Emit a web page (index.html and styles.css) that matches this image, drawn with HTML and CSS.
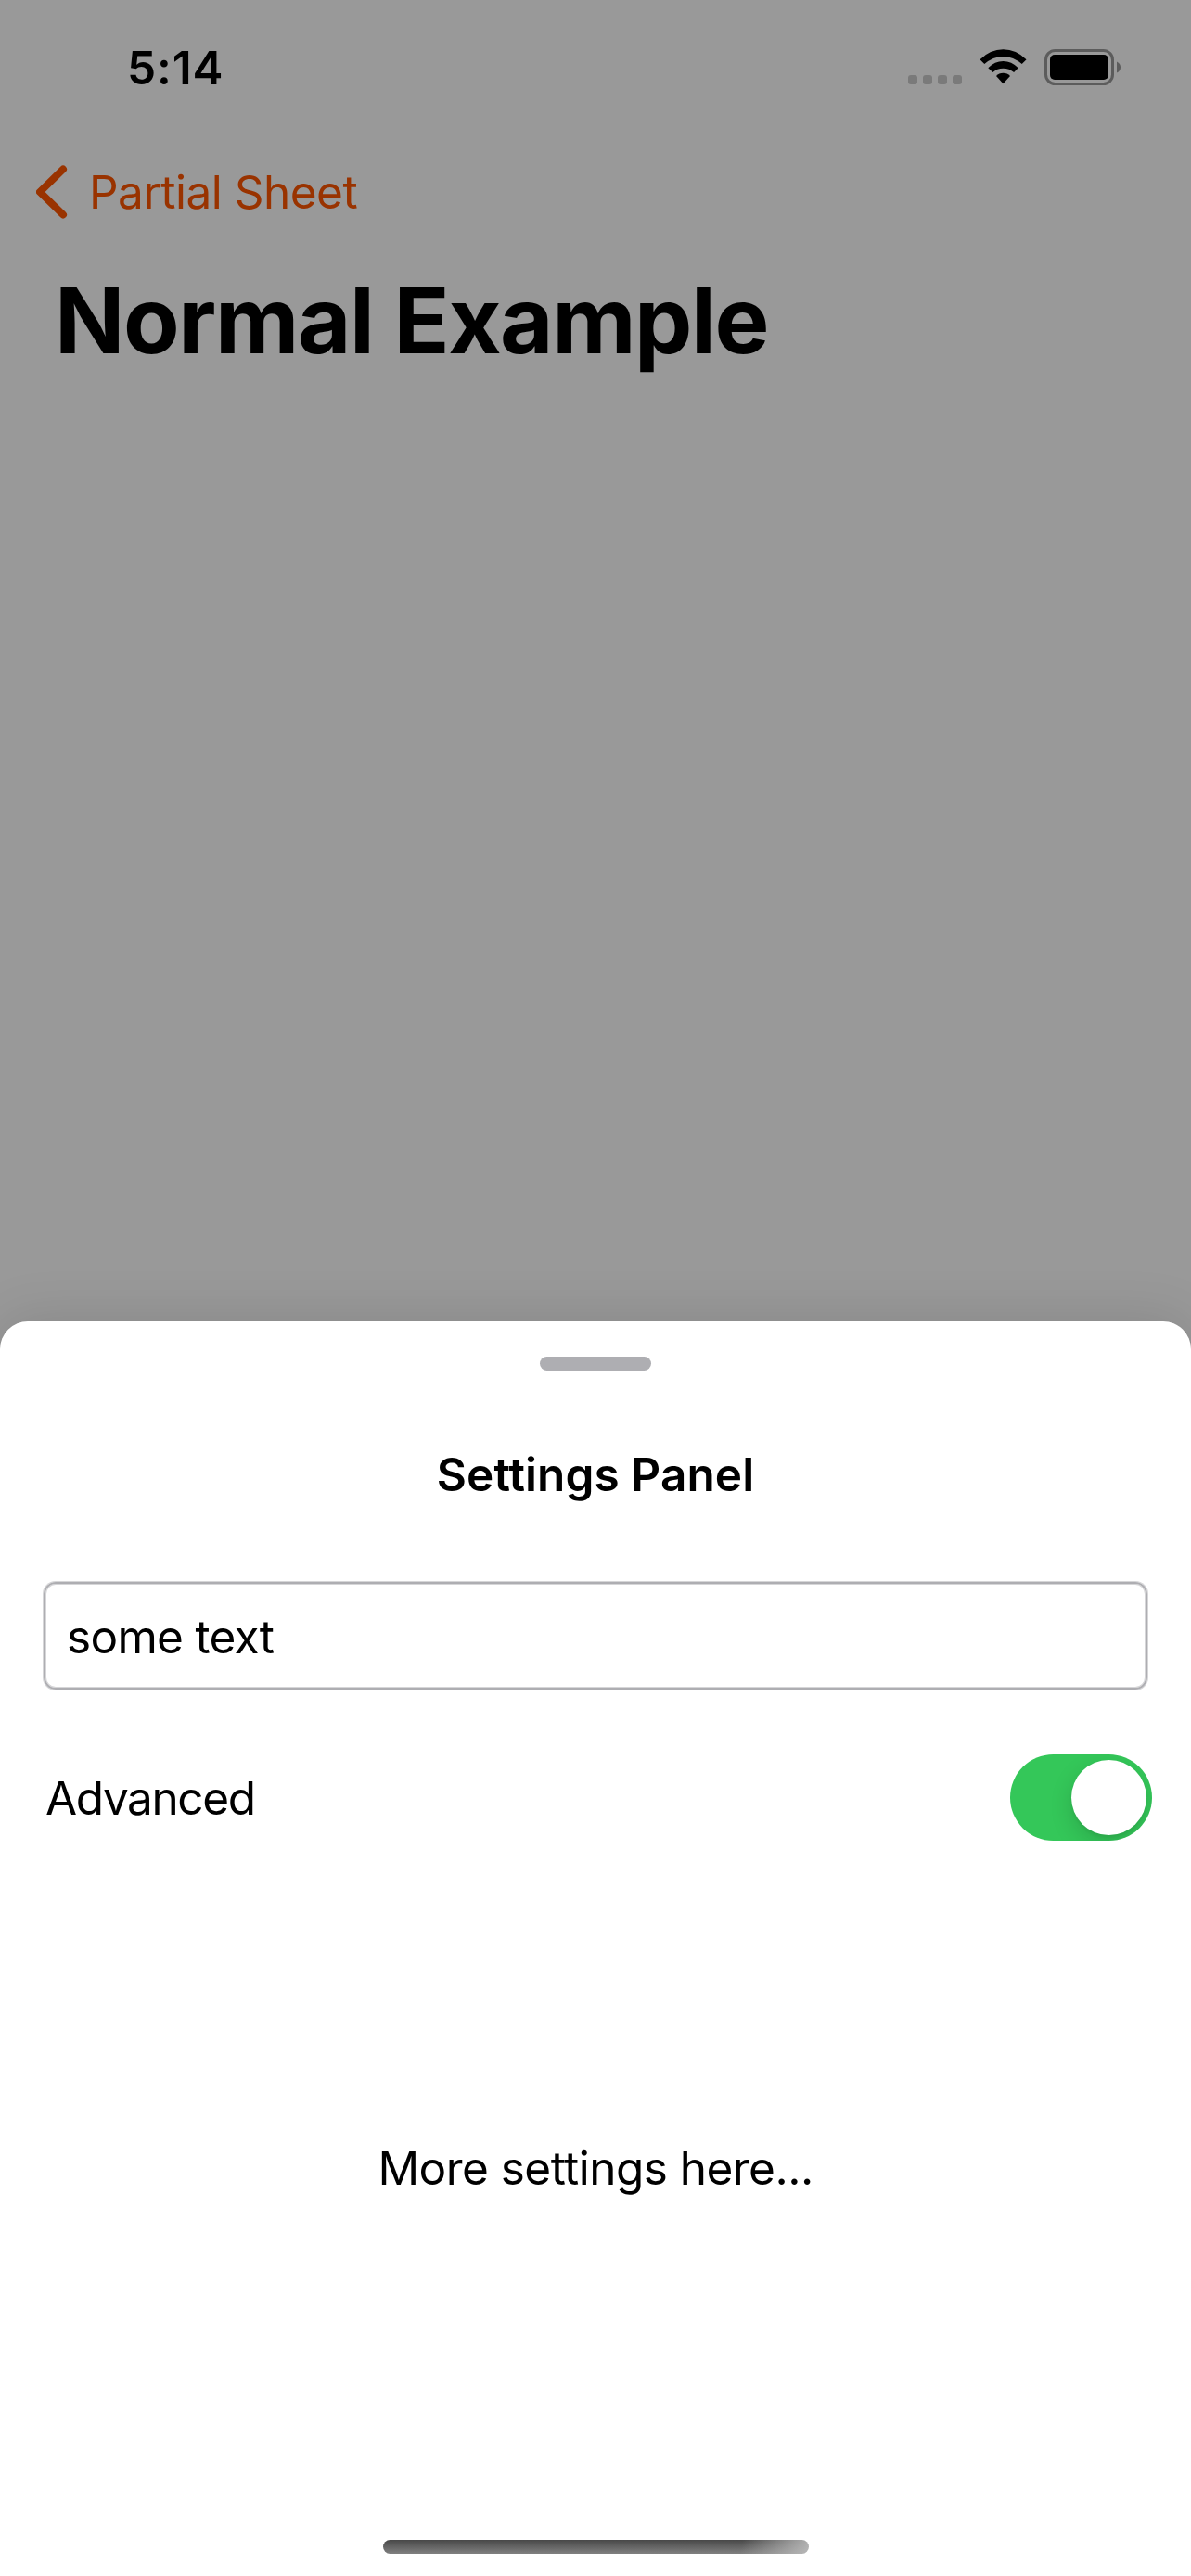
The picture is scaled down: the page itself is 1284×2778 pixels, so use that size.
FILE: index.html
```html
<!DOCTYPE html>
<html lang="en">
<head>
<meta charset="utf-8">
<title>Normal Example</title>
<link rel="stylesheet" href="styles.css">
</head>
<body>
<main class="screen">
  <header class="status-bar">
    <span class="time">5:14</span>
    <div class="indicators">
      <div class="signal"><i></i><i></i><i></i><i></i></div>
      <svg class="wifi" width="51" height="38" viewBox="0 0 51 38">
        <path d="M.5 11.2Q11.5.3 25.5.3T50.500 11.200L45.700 16Q36.500 7.900 25.500 7.900T5.300 16Z"/>
        <path d="M9.300 20.200Q16.500 12.900 25.500 12.900T41.700 20.200L37.100 25Q32 20.700 25.500 20.700T14.300 25Z"/>
        <path d="M18 29Q20.900 25.700 25.500 25.700T33 29L25.500 37.200Z"/>
      </svg>
      <svg class="battery" width="83" height="39" viewBox="0 0 83 39">
        <rect class="shell" x="1.500" y="1.500" width="72" height="36" rx="10"/>
        <rect x="6" y="6" width="63" height="27" rx="5"/>
        <path class="nub" d="M78 13.500Q82 15.500 82 19.500T78 25.500Z"/>
      </svg>
    </div>
  </header>
  <nav class="nav">
    <svg class="chevron" width="34" height="58" viewBox="0 0 34 58"><path d="M29 4.500L4 29L29 53.500"/></svg>
    <span class="back">Partial Sheet</span>
  </nav>
  <h1 class="title">Normal Example</h1>
  <section class="sheet">
    <div class="handle"></div>
    <h2 class="heading">Settings Panel</h2>
    <div class="field">some text</div>
    <div class="row">
      <span class="advanced">Advanced</span>
      <div class="toggle"><div class="knob"></div></div>
    </div>
    <p class="more">More settings here...</p>
    <div class="home-bar"></div>
  </section>
</main>
</body>
</html>
```

FILE: styles.css
```css
* { box-sizing: border-box; margin: 0; padding: 0; }
body {
  font: 400 49.5px/60px Inter, "Liberation Sans", sans-serif;
  color: #000;
  background: #999;
}
.screen {
  width: 1284px;
  height: 2778px;
  display: flex;
  flex-direction: column;
  overflow: hidden;
  background: #999;
}
.status-bar {
  height: 146px;
  padding: 0 75px 0 137px;
  display: flex;
  align-items: center;
  justify-content: space-between;
  flex: none;
}
.time { font-weight: 600; letter-spacing: .9px; }
.indicators { height: 40px; padding-bottom: 1px; display: flex; align-items: flex-end; }
.signal { display: flex; gap: 6px; margin: 0 19px 1px 0; }
.signal i { width: 10px; height: 10px; border-radius: 3px; background: #7a7a7a; }
.wifi { margin: 0 19px 1px 0; }
.shell { fill: none; stroke: #5c5c5c; stroke-width: 3; }
.nub { fill: #5c5c5c; }
.nav {
  height: 122px;
  padding-left: 39px;
  display: flex;
  align-items: center;
  gap: 23px;
  color: #930;
  flex: none;
}
.back { letter-spacing: -.5px; }
.chevron path {
  fill: none;
  stroke: #930;
  stroke-width: 8;
  stroke-linecap: round;
  stroke-linejoin: round;
}
.title {
  height: 154px;
  padding-left: 59px;
  font-size: 99px;
  line-height: 154px;
  font-weight: 700;
  letter-spacing: -1.4px;
  margin-bottom: 1003px;
  flex: none;
}
.sheet {
  flex: 1;
  display: flex;
  flex-direction: column;
  background: #fff;
  border-radius: 30px 30px 0 0;
  box-shadow: 0 0 60px rgba(0, 0, 0, .13);
}
.handle {
  width: 120px;
  height: 15px;
  margin: 38px auto 82px;
  border-radius: 8px;
  background: #aeaeb2;
}
.heading {
  font-size: 49.5px;
  font-weight: 600;
  line-height: 60px;
  letter-spacing: .1px;
  text-align: center;
}
.field {
  height: 116px;
  margin: 86px 47px 0;
  padding: 1px 0 0 23px;
  display: flex;
  align-items: center;
  border: 2px solid #aeaeb2;
  border-radius: 13px;
  box-shadow: 0 0 0 1px #d6d6d8, inset 0 0 0 1px #d6d6d8;
  letter-spacing: -.7px;
}
.row {
  height: 93px;
  margin: 70px 42px 0 49px;
  display: flex;
  align-items: center;
  justify-content: space-between;
}
.advanced { letter-spacing: -1.4px; }
.toggle {
  width: 153px;
  height: 93px;
  padding: 6px;
  display: flex;
  justify-content: flex-end;
  border-radius: 47px;
  background: #34c759;
  overflow: hidden;
}
.knob {
  width: 81px;
  height: 81px;
  border-radius: 50%;
  background: #fff;
  box-shadow: 0 9px 24px rgba(0, 0, 0, .15), 0 3px 3px rgba(0, 0, 0, .05);
}
.more { margin-top: 323px; text-align: center; letter-spacing: -.53px; }
.home-bar {
  width: 459px;
  height: 15px;
  margin: auto auto 24px;
  border-radius: 8px;
  background:
    linear-gradient(100deg, rgba(190, 190, 190, 0) 84%, rgba(190, 190, 190, .9) 100%),
    linear-gradient(#484848, #808080);
}
```
